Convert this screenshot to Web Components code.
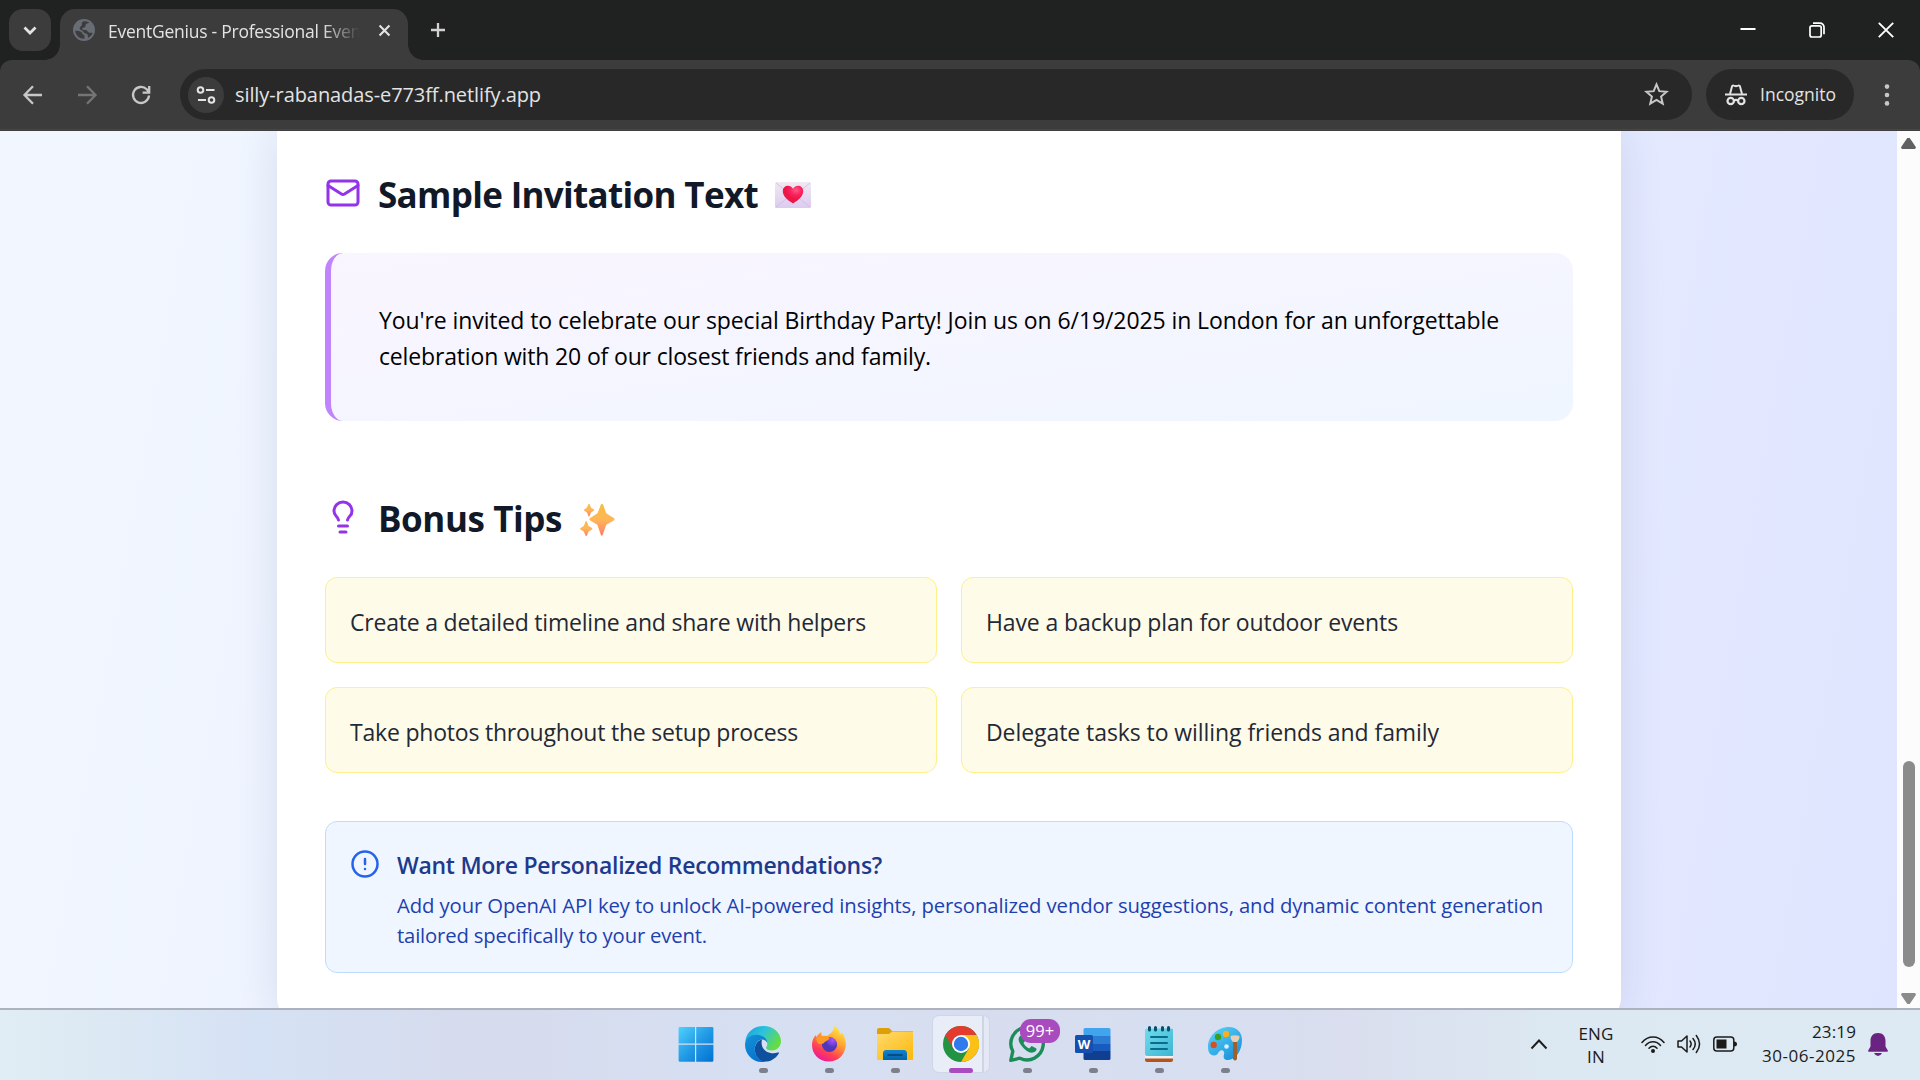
<!DOCTYPE html>
<html lang="en">
<head>
<meta charset="UTF-8">
<title>EventGenius - Professional Event Planner</title>
<style>
  body {
    margin: 0;
    width: 1920px;
    height: 1080px;
    overflow: hidden;
    display: flex;
    flex-direction: column;
    font-family: "Open Sans", "Noto Sans", sans-serif;
  }
</style>
</head>
<body>

<browser-tabs>
  <fit-line slot="title" width="253">EventGenius - Professional Even</fit-line>
</browser-tabs>
<browser-toolbar>
  <fit-line slot="url" width="306">silly-rabanadas-e773ff.netlify.app</fit-line>
</browser-toolbar>

<page-view>
  <section-title icon="mail" emoji="letter">
    <fit-line width="380">Sample Invitation Text</fit-line>
  </section-title>
  <invite-quote>
    <fit-line width="1120">You're invited to celebrate our special Birthday Party! Join us on 6/19/2025 in London for an unforgettable</fit-line>
    <fit-line width="552">celebration with 20 of our closest friends and family.</fit-line>
  </invite-quote>
  <section-title icon="bulb" emoji="sparkles" class="second">
    <fit-line width="184">Bonus Tips</fit-line>
  </section-title>
  <tip-grid>
    <tip-card><fit-line width="516">Create a detailed timeline and share with helpers</fit-line></tip-card>
    <tip-card><fit-line width="412">Have a backup plan for outdoor events</fit-line></tip-card>
    <tip-card><fit-line width="448">Take photos throughout the setup process</fit-line></tip-card>
    <tip-card><fit-line width="453">Delegate tasks to willing friends and family</fit-line></tip-card>
  </tip-grid>
  <info-callout>
    <fit-line slot="title" width="485">Want More Personalized Recommendations?</fit-line>
    <fit-line width="1146">Add your OpenAI API key to unlock AI-powered insights, personalized vendor suggestions, and dynamic content generation</fit-line>
    <fit-line width="310">tailored specifically to your event.</fit-line>
  </info-callout>
</page-view>

<task-bar>
  <task-item icon="windows"></task-item>
  <task-item icon="edge" running></task-item>
  <task-item icon="firefox" running></task-item>
  <task-item icon="folder" running></task-item>
  <task-item icon="chrome" running active></task-item>
  <task-item icon="whatsapp" running badge="99+"></task-item>
  <task-item icon="word" running></task-item>
  <task-item icon="notepad" running></task-item>
  <task-item icon="paint" running></task-item>
  <system-tray slot="tray"></system-tray>
</task-bar>

<script>
// name -> [viewBox, markup]
const ICONS = {
  chevronDown: ['0 0 24 24', '<path d="M6.5 9.5 12 15l5.5-5.5" fill="none" stroke="currentColor" stroke-width="2.8"/>'],
  globe: ['0 0 22 22', '<circle cx="11" cy="11" r="11" fill="currentColor"/><path d="M2.2 11.800c2.600.1 4.800.3 6 1.200 1.300 1 .8 2.400 2.300 2.800 1 .3 1 1.200 1 2.200v1.800C6.500 20 2.600 16.500 2.200 11.800ZM10.500 2.200c3-.2 4.300.4 5.700 1.400-1 1.200-2.700.9-3.400 1.900-.7 1.100.2 1.900-1 2.700-1.200.7-2.400.2-2.600 1.500-.1 1.200 1.500 1.300 3.300 1.300 1.900 0 1.900 1.900 3.200 2.500 1.300.5 2.600.1 4 .2-.8 2.300-2.500 4.200-4.900 5.300.2-1.700.4-3.300-.8-4-1.500-.8-3-.5-3.600-2.200C9.800 11.300 7 11.700 6.700 9.300c-.2-2 1.800-1.900 2.100-3.400.2-1.300-.6-2.400 1.700-3.700Z" fill="#3c3c3c"/>'],
  close: ['0 0 24 24', '<path d="m5 5 14 14M19 5 5 19" fill="none" stroke="currentColor" stroke-width="3"/>'],
  plus: ['0 0 16 16', '<path d="M8 1v14M1 8h14" fill="none" stroke="currentColor" stroke-width="2.3"/>'],
  minimise: ['0 0 16 16', '<path d="M.5 7h15" stroke="currentColor" stroke-width="2"/>'],
  restore: ['0 0 16 16', '<rect x="1" y="3.8" width="11.2" height="11.2" rx="2" fill="none" stroke="currentColor" stroke-width="1.7"/><path d="M4 1.2h7a4 4 0 0 1 4 4v7" fill="none" stroke="currentColor" stroke-width="1.7"/>'],
  winClose: ['0 0 16 16', '<path d="m.8.8 14.4 14.4M15.2.8.8 15.2" stroke="currentColor" stroke-width="1.9"/>'],
  back: ['0 0 24 24', '<path d="M21 12H4M12 3.2 3.500 12l8.500 8.800" fill="none" stroke="currentColor" stroke-width="2.3"/>'],
  forward: ['0 0 24 24', '<path d="M3 12h17M12 3.2l8.500 8.800-8.500 8.800" fill="none" stroke="currentColor" stroke-width="2.3"/>'],
  reload: ['0 0 24 24', '<path d="M20 12.5a8 8 0 1 1-2.3-6.200L20 9M20.2 3v6.600h-6.600" fill="none" stroke="currentColor" stroke-width="2.3"/>'],
  tune: ['0 0 20 20', '<g fill="none" stroke="currentColor" stroke-width="2"><circle cx="4.500" cy="5" r="2.800"/><path d="M10 5h8.500M2 15h8"/><circle cx="15.5" cy="15" r="2.8"/></g>'],
  star: ['0 0 24 24', '<path d="m12 2.300 2.700 6.500 7 .6-5.300 4.600 1.600 6.800-6-3.600-6 3.600L7.600 14 2.300 9.400l7-.6Z" fill="none" stroke="currentColor" stroke-width="1.9"/>'],
  incognito: ['0 0 24 24', '<path d="M1 11.5h22" stroke="currentColor" stroke-width="2"/><path d="M6 11 8 3.500c.3-1 1-1.200 1.800-.9l2.200.7 2.200-.7c.8-.3 1.500-.1 1.800.9L18 11" fill="none" stroke="currentColor" stroke-width="2"/><g fill="none" stroke="currentColor" stroke-width="2.2"><circle cx="6.700" cy="18" r="3.200"/><circle cx="17.300" cy="18" r="3.200"/><path d="M10 17.500q2-1.200 4 0"/></g>'],
  dots: ['0 0 6 24', '<g fill="currentColor"><circle cx="3" cy="3.600" r="2.300"/><circle cx="3" cy="12" r="2.300"/><circle cx="3" cy="20.400" r="2.300"/></g>'],

  mail: ['0 0 24 24', '<g fill="none" stroke="currentColor" stroke-width="2" stroke-linecap="round" stroke-linejoin="round"><rect width="20" height="16" x="2" y="4" rx="2"/><path d="m22 7-8.970 5.700a1.940 1.940 0 0 1-2.060 0L2 7"/></g>'],
  bulb: ['0 0 24 24', '<path d="M15 14c.2-1 .7-1.700 1.500-2.500 1-.9 1.500-2.200 1.500-3.500A6 6 0 0 0 6 8c0 1 .2 2.200 1.500 3.500.7.7 1.300 1.500 1.500 2.500M9 18h6M10 22h4" fill="none" stroke="currentColor" stroke-width="2" stroke-linecap="round" stroke-linejoin="round"/>'],
  alert: ['0 0 24 24', '<g fill="none" stroke="currentColor" stroke-width="2" stroke-linecap="round"><circle cx="12" cy="12" r="10"/><path d="M12 8v4M12 16h.01"/></g>'],
  letter: ['0 0 36 36', `
    <defs>
      <linearGradient id="env" x2="0" y2="1"><stop stop-color="#f1e9f2"/><stop offset="1" stop-color="#dccbf0"/></linearGradient>
      <radialGradient id="heart" cx=".65" cy=".25"><stop stop-color="#ff5a84"/><stop offset=".55" stop-color="#fb2260"/><stop offset="1" stop-color="#ec1746"/></radialGradient>
    </defs>
    <rect y="5" width="36" height="26" rx="1.5" fill="url(#env)"/>
    <path d="m1 30 12-9.500M35 30l-12-9.500M1 6l10 8M35 6l-10 8" stroke="#cbbce0" stroke-width=".8"/>
    <path d="M18 26.500C12 23 7.800 18.800 7.800 14.300c0-6.300 7.500-7.300 10.200-2.600 2.700-4.700 10.200-3.700 10.200 2.600 0 4.500-4.200 8.700-10.200 12.200Z" fill="url(#heart)"/>`],
  sparkles: ['0 0 36 36', `
    <defs><linearGradient id="spark" x2="0" y2="1"><stop stop-color="#f5be45"/><stop offset=".5" stop-color="#ffb657"/><stop offset="1" stop-color="#ff7c6b"/></linearGradient></defs>
    <g fill="url(#spark)">
      <path d="M21.800 3.800q1.200-2.200 2.400 0l3 8.500 7.500 4.700q1.800 1.200 0 2.400l-7.500 4.300-3.400 10q-1 2.200-2 0l-3.400-10-7.200-4.300q-1.800-1.200 0-2.400l7.300-4.700Z"/>
      <path d="M9.400 3.200q.6-1 1.200 0l1.300 3.400 2.900 1.800q.9.700 0 1.400L12 11.500l-1.400 3.600q-.6 1-1.200 0L8 11.500 5.300 9.800q-.9-.7 0-1.400L8 6.600Z"/>
      <path d="M6.500 20.700q.7-1.200 1.400 0l1.700 4.400 3.400 2q.9.700 0 1.400l-3.400 2-1.700 4q-.7 1.200-1.400 0l-1.700-4-3.300-2q-.9-.7 0-1.400l3.300-2Z"/>
    </g>`],

  windows: ['0 0 36 36', `
    <defs><linearGradient id="win" gradientUnits="userSpaceOnUse" x1="0" y1="0" x2="36" y2="36"><stop stop-color="#50d4ff"/><stop offset=".5" stop-color="#239be6"/><stop offset="1" stop-color="#0070d1"/></linearGradient></defs>
    <path d="M2 1h15v16.500H.6V2.300Q.6 1 2 1Zm16.200 0H34q1.400 0 1.400 1.300v15.200H18.200ZM.6 18.700H17v17.100H2q-1.400 0-1.400-1.300Zm17.600 0h17.200v15.800q0 1.300-1.400 1.300H18.200Z" fill="url(#win)"/>`],
  edge: ['0 0 36 36', `
    <defs>
      <linearGradient id="e1" x2="1" y2=".5"><stop stop-color="#1a9de0"/><stop offset=".5" stop-color="#2cc3dc"/><stop offset="1" stop-color="#65dc45"/></linearGradient>
      <linearGradient id="e2" x2=".6" y2="1"><stop stop-color="#1493d6"/><stop offset="1" stop-color="#0670cf"/></linearGradient>
    </defs>
    <path d="M.4 15C1.500 6 9 0 18.500 0 29 0 36 7.500 36 15c0 5.500-4 9.500-9 9.500-4 0-6-1.500-6-2.600 0-.9 1.300-1.500 1.300-4.200 0-2.200-3.500-5-8.300-5Z" fill="url(#e1)"/>
    <path d="M0 18.500C.2 12 6 8.700 11.500 8.700c7 0 10.800 4.600 10.800 8.300-.8-2.300-2.800-3.600-5-3.600-4.500 0-7.500 4.500-7.500 10 0 6.500 5 11.600 11 12.300C9 38 0 29 0 18.500Z" fill="url(#e2)"/>
    <path d="M17 13.500c-4.500 1-7.200 5.200-7.200 9.900C9.800 30.500 15.300 36 22 35.600c5-.8 9.300-4 11.800-8.200.4-.8-.3-1.300-1-1-7 2.800-18.500-1.500-15.800-12.900Z" fill="#0e509e"/>`],
  firefox: ['0 0 36 36', `
    <defs>
      <linearGradient id="f1" x1=".85" x2=".3" y2="1"><stop stop-color="#fff14a"/><stop offset=".4" stop-color="#ffa52f"/><stop offset=".75" stop-color="#ff3f54"/><stop offset="1" stop-color="#ed15a0"/></linearGradient>
      <radialGradient id="f2" cx=".7" cy=".2"><stop stop-color="#ad53ff"/><stop offset="1" stop-color="#4e36bd"/></radialGradient>
    </defs>
    <path d="M23.500 0c4 2.200 5 5.500 5.500 8.500l1.800-2c3 3.500 4.200 8 4 12.500C34.200 29 27 35.500 18 35.500 8 35.500 1 28 1 19c0-4 1.500-8 4-10l.6 2.500c1-2.800 3.200-4.700 4.800-5.500-.3 1.600.2 3 .6 4 1.500-.5 3.200-.5 5 0 3-2 7-4.500 7.500-10Z" fill="url(#f1)"/>
    <circle cx="18.500" cy="18.500" r="7.600" fill="url(#f2)"/>
    <path d="M10 9.800c3.500 1 5.800-.2 8.800 2.300-1 2-3 2.500-4.200 3.500-1.700 1.300-2.400 3-5.600 2.400-2.700-.5-3.800-3-3.400-6.500Z" fill="#ff9a27"/>`],
  folder: ['0 0 36 36', `
    <defs><linearGradient id="fo" x2=".8" y2="1"><stop stop-color="#ffdb70"/><stop offset="1" stop-color="#fdba10"/></linearGradient>
    <linearGradient id="fb" x2="0" y2="1"><stop stop-color="#1183d2"/><stop offset="1" stop-color="#0562a5"/></linearGradient></defs>
    <path d="M0 4q0-2 2-2h9q1.500 0 2.500 1.200L15 5h21v5H0Z" fill="#dda009"/>
    <path d="M0 8h12l3-2.500h21V34H0Z" fill="url(#fo)"/>
    <path d="M6 34v-6.500Q6 24 9 24h18q3 0 3 3.500V34Z" fill="url(#fb)"/><path d="M11 29h14" stroke="#063f73" stroke-width="1.6" stroke-linecap="round"/>`],
  chrome: ['0 0 36 36', `
    <circle cx="18" cy="18" r="18" fill="#229342"/>
    <path d="M18 9h15.600A18 18 0 0 0 2.400 9l7.800 13.500Z" fill="#e33b2e"/>
    <path d="M18 9h15.600A18 18 0 0 1 18 36l7.800-13.500Z" fill="#fcc117"/>
    <circle cx="18" cy="18" r="9" fill="#fff"/><circle cx="18" cy="18" r="7.2" fill="#2f7bee"/>`],
  whatsapp: ['0 0 36 36', `
    <path d="m1.800 34.300 2-9A16.200 16.200 0 1 1 11 32.200Z" fill="none" stroke="#1c8c58" stroke-width="3.4" stroke-linejoin="round"/>
    <path d="M12.500 9.500c-4 1-3.500 5.500-.5 9.500 4 5.500 8.500 8.300 12 7.500 3-.7 3.800-2.300 3.400-4l-4.700-2.400-2.500 2.400c-2.500-1-4.500-3-5.700-5.400l1.700-2.300-2-4.800Z" fill="#1c8c58"/>`],
  word: ['0 0 36 36', `
    <path d="M10 2h24q1.500 0 1.500 1.500V10H8.500V3.500Q8.500 2 10 2Z" fill="#41a5ee"/><path d="M8.500 10h27v8h-27Z" fill="#2b7cd3"/><path d="M8.500 18h27v7h-27Z" fill="#185abd"/><path d="M8.500 25h27v7.500q0 1.500-1.500 1.500H10q-1.500 0-1.500-1.500Z" fill="#103f91"/>
    <rect y="9" width="18" height="18" rx="1.5" fill="#1650ae"/>
    <text x="9" y="22.7" text-anchor="middle" font-size="13" font-weight="700" fill="#fff">W</text>`],
  notepad: ['0 0 36 36', `
    <defs><linearGradient id="np" x2="1" y2="1"><stop stop-color="#6fdcec"/><stop offset="1" stop-color="#3fb5d3"/></linearGradient></defs>
    <path d="M4 29h28v5q0 2-2 2H6q-2 0-2-2Z" fill="#b5531b"/><path d="M4 29h28v3.500H4Z" fill="#f3f1f0"/>
    <path d="M4 4q0-1.500 1.500-1.500h25Q32 2.500 32 4v26H6q-2 0-2-2Z" fill="url(#np)"/>
    <path d="M8.500 1.500v2.500M14.500 1.500v2.500M21.500 1.500v2.500M27.500 1.500v2.500" stroke="#07506e" stroke-width="3" stroke-linecap="round"/>
    <path d="M10 11h16M10 17h16M10 23h16" stroke="#086d8c" stroke-width="2" stroke-linecap="round"/>`],
  paint: ['0 0 36 36', `
    <defs><linearGradient id="pa" x2=".8" y2="1"><stop stop-color="#5ad8fa"/><stop offset="1" stop-color="#198fdc"/></linearGradient></defs>
    <path d="M22 1c8 0 13 5.500 13 13 0 10-5.500 19.500-14 20-4 .3-5-2.500-4-5.500 1-3.200-1.300-5-3.500-4-2.500 1.200-2.500 5-6.500 5C3 29.500.8 26 1 20 1.500 9.500 11 1 22 1Z" fill="url(#pa)"/>
    <circle cx="6.700" cy="19" r="3.200" fill="#d85022"/><circle cx="11" cy="11" r="3.200" fill="#3a9e22"/><circle cx="19" cy="8" r="3.200" fill="#fbb116"/><circle cx="19.500" cy="20.500" r="2.300" fill="#d7f1fc"/>
    <path d="M26 16h4v17q-2 3-4 0Z" fill="#a1602a"/><path d="M23.500 10q4.500-1.500 9 0c0 3-1 4-2.500 6h-4c-1.500-2-2.500-3-2.500-6Z" fill="#e8cdb0"/>`],

  chevronUp: ['0 0 18 12', '<path d="m1.500 10.500 7.500-8 7.500 8" fill="none" stroke="currentColor" stroke-width="1.9"/>'],
  wifi: ['0 0 24 20', '<g fill="none" stroke="currentColor" stroke-width="1.5" stroke-linecap="round"><path d="M1 8.500C7 1 17 1 23 8.500M4.500 11.500c4.200-5 10.800-5 15 0M8 14.300c2.300-2.600 5.700-2.600 8 0"/></g><circle cx="12" cy="17" r="2" fill="currentColor"/>'],
  speaker: ['0 0 24 20', '<g fill="none" stroke="currentColor" stroke-width="1.5" stroke-linecap="round" stroke-linejoin="round"><path d="M1 7v6h3.500l5.500 5V2L4.500 7ZM13 7q2.300 3 0 6M16 4.500q4.500 5.500 0 11M19.300 1.500q6.500 8.500 0 17"/></g>'],
  battery: ['0 0 24 20', '<rect x=".8" y="3" width="20" height="14" rx="3" fill="none" stroke="currentColor" stroke-width="1.5"/><path d="M3.500 5.500h10v9h-10ZM21 7.500q3 0 3 2.500t-3 2.500Z" fill="currentColor"/>'],
  bell: ['0 0 20 24', '<path d="M10 0c5 0 7.500 3.500 7.500 8v5.500l2.300 4q.5 1.300-.8 1.300H1q-1.300 0-.8-1.300l2.300-4V8C2.500 3.500 5 0 10 0ZM6 20h8q-1.500 3-4 3t-4-3Z" fill="currentColor"/>'],
}

const icon = (name, w, h = w) => {
  const [box, body] = ICONS[name]
  return `<svg width="${w}" height="${h}" viewBox="${box}" aria-hidden="true">${body}</svg>`
}

const define = (name, html) => {
  customElements.define(name, class extends HTMLElement {
    constructor() {
      super()
      this.attachShadow({ mode: 'open' }).innerHTML =
        `<style>svg { display: block; flex: none; }</style>` +
        (typeof html === 'function' ? html(this) : html)
    }
  })
}

/**
 * <fit-line width="306">text</fit-line>
 * One line of text, tracked so that it spans the given width.
 */
class FitLine extends HTMLElement {
  constructor() {
    super()
    this.attachShadow({ mode: 'open' }).innerHTML = `
      <style>
        :host { display: block; width: max-content; white-space: nowrap; }
      </style>
      <slot></slot>`
  }

  fit() {
    const target = Number(this.getAttribute('width'))
    this.style.letterSpacing = '0'
    const natural = this.getBoundingClientRect().width
    this.style.letterSpacing = `${(target - natural) / this.textContent.length}px`
  }
}

define('browser-tabs', `
  <style>
    :host { display: flex; height: 60px; background: #202221; color: #e3e3e3; flex: none; }
    .menu { width: 42px; height: 42px; margin: 9px 9px 0; border-radius: 14px; background: #3c3c3c;
            display: grid; place-items: center; }
    .tab { position: relative; width: 348px; height: 51px; margin-top: 9px; box-sizing: border-box; padding: 0 15px 9px 13px;
           display: flex; align-items: center; background: #3c3c3c; border-radius: 15px 15px 0 0; }
    /* flares where the tab meets the toolbar */
    .tab::before, .tab::after { content: ''; position: absolute; bottom: 0; width: 15px; height: 15px; }
    .tab::before { left: -15px; background: radial-gradient(circle at 0 0, transparent 14.5px, #3c3c3c 15px); }
    .tab::after { right: -15px; background: radial-gradient(circle at 100% 0, transparent 14.5px, #3c3c3c 15px); }
    .globe { color: #686d75; }
    .title { width: 252px; margin: 2px 0 0 13px; overflow: hidden; font-size: 17.5px; line-height: 26px;
             mask-image: linear-gradient(90deg, #000 85%, transparent); }
    .close { margin-left: auto; }
    .plus { margin: 22px 0 0 22px; color: #d2d2d2; }
    .controls { margin: 22px 26px 0 auto; display: flex; gap: 53px; color: #fff; }
  </style>
  <div class="menu">${icon('chevronDown', 24)}</div>
  <div class="tab">
    <div class="globe">${icon('globe', 22)}</div>
    <div class="title"><slot name="title"></slot></div>
    <div class="close">${icon('close', 17)}</div>
  </div>
  <div class="plus">${icon('plus', 16)}</div>
  <div class="controls">${icon('minimise', 16)}${icon('restore', 16)}${icon('winClose', 16)}</div>
`)

define('browser-toolbar', `
  <style>
    :host { display: block; height: 71px; background: #202221; flex: none; }
    .bar { height: 71px; box-sizing: border-box; padding: 9px 24px 9px 21px; display: flex; align-items: flex-start;
           background: linear-gradient(#3c3c3c 69px, #494949 69px, #3c3c3c 71px); border-radius: 12px 12px 0 0; }
    .nav { display: flex; gap: 30px; height: 51px; align-items: center; color: #c7c7c7; }
    .nav :nth-child(2) { color: #757575; }
    .omni { width: 1512px; height: 51px; box-sizing: border-box; margin-left: 27px; padding: 0 23px 0 8px; border-radius: 26px;
            background: #282828; display: flex; align-items: center; color: #e3e3e3; }
    .site { width: 36px; height: 36px; border-radius: 50%; background: #3c3c3c; display: grid; place-items: center; }
    .url { margin-left: 11px; font-size: 20px; line-height: 28px; }
    .star { margin-left: auto; color: #c7c7c7; }
    .incognito { width: 148px; height: 51px; box-sizing: border-box; margin-left: 14px; padding-left: 18px; border-radius: 26px;
                 background: #282828; display: flex; align-items: center; gap: 12px; color: #e3e3e3; font-size: 17.5px; }
    .incognito fit-line { margin-top: -1px; }
    .dots { margin: 14px 0 0 auto; color: #c7c7c7; padding-right: 6px; }
  </style>
  <div class="bar">
    <div class="nav"><i>${icon('back', 24)}</i><i>${icon('forward', 24)}</i><i>${icon('reload', 24)}</i></div>
    <div class="omni">
      <div class="site">${icon('tune', 20)}</div>
      <div class="url"><slot name="url"></slot></div>
      <div class="star">${icon('star', 25)}</div>
    </div>
    <div class="incognito">${icon('incognito', 24)}<fit-line width="76">Incognito</fit-line></div>
    <div class="dots">${icon('dots', 6, 24)}</div>
  </div>
`)

define('page-view', `
  <style>
    :host { height: 877px; display: flex; overflow: hidden; flex: none; }
    .backdrop { flex: 1; background: linear-gradient(100deg, #f2f7ff, #e9efff 50%, #e0e5ff); }
    .card { width: 1344px; height: 891px; box-sizing: border-box; margin-left: 277px; padding: 36px 48px 0;
            background: #fff; border-radius: 0 0 24px 24px; box-shadow: 0 0 44px rgb(30 40 90 / 11%); }
    .scroll { width: 23px; background: #fcfcfc; display: flex; flex-direction: column; align-items: center; }
    .up, .down { width: 15px; height: 11px; background: #616161; clip-path: polygon(42% 0, 58% 0, 100% 85%, 94% 100%, 6% 100%, 0 85%); }
    .up { margin-top: 7px; }
    .down { margin-top: auto; margin-bottom: 4px; background: #8b8b8b; transform: scaleY(-1); }
    .thumb { width: 12px; height: 206px; margin-top: 612px; border-radius: 6px; background: #8b8b8b; }
  </style>
  <div class="backdrop"><div class="card"><slot></slot></div></div>
  <div class="scroll"><div class="up"></div><div class="thumb"></div><div class="down"></div></div>
`)

define('section-title', el => `
  <style>
    :host { display: flex; height: 54px; margin-bottom: 32px; color: #111827; font-size: 35px; font-weight: 700; line-height: 56px; }
    :host(.second) { margin-top: 70px; }
    .icon { margin: 8px 17px 0 0; color: #9333ea; }
    .emoji { margin: 10px 0 0 17px; }
  </style>
  <div class="icon">${icon(el.getAttribute('icon'), 36)}</div>
  <slot></slot>
  <div class="emoji">${icon(el.getAttribute('emoji'), 36)}</div>
`)

define('invite-quote', `
  <style>
    :host { display: block; height: 168px; box-sizing: border-box; padding: 49px 0 0 48px; border-left: 6px solid #c084fc;
            border-radius: 18px; background: linear-gradient(to bottom right, #faf5ff, #eff6ff); color: #000;
            font-size: 23px; line-height: 36px; }
  </style>
  <slot></slot>
`)

define('tip-grid', `
  <style>
    :host { display: grid; grid-template-columns: 1fr 1fr; gap: 24px; }
  </style>
  <slot></slot>
`)

define('tip-card', `
  <style>
    :host { display: flex; align-items: center; height: 86px; box-sizing: border-box; padding: 3px 24px 0;
            border: 1px solid #fef08a; border-radius: 12px; background: #fefbe8; color: #1f2937;
            font-size: 23px; line-height: 36px; }
  </style>
  <slot></slot>
`)

define('info-callout', `
  <style>
    :host { display: flex; height: 152px; box-sizing: border-box; margin-top: 48px; padding: 25px 24px 0;
            border: 1px solid #bfdbfe; border-radius: 12px; background: #eff6ff; }
    .icon { margin: 2px 17px 0 0; color: #2563eb; }
    .title { margin-bottom: 7px; color: #1e3a8a; font-size: 23px; font-weight: 600; line-height: 36px; }
    .body { color: #1e40af; font-size: 20.3px; line-height: 30px; }
  </style>
  <div class="icon">${icon('alert', 30)}</div>
  <div>
    <div class="title"><slot name="title"></slot></div>
    <div class="body"><slot></slot></div>
  </div>
`)

define('task-bar', `
  <style>
    :host { display: grid; grid-template-columns: 1fr 594px 1fr; height: 72px; box-sizing: border-box; border-top: 2px solid #adb2be; flex: none;
            background: linear-gradient(90deg, #e0edf3, #d5e1f4 14%, #d6dbed 25%, #d6e0f3 40%, #d7ddef 52%, #d6dff1 60%, #dadeee 70%, #dce9f2 82%, #dde9f3); }
    .apps { grid-column: 2; display: flex; padding-left: 1px; }
  </style>
  <div class="apps"><slot></slot></div>
  <slot name="tray"></slot>
`)

define('task-item', el => {
  const badge = el.getAttribute('badge')
  return `
  <style>
    :host { position: relative; width: 66px; height: 70px; flex: none; display: flex; flex-direction: column; align-items: center; }
    :host([icon="windows"]) svg { margin-right: 2px; }
    .tile { width: 56px; height: 56px; margin-top: 6px; display: grid; place-items: center; border-radius: 6px; }
    :host([active]) .tile { background: linear-gradient(90deg, #e9edf8 49px, #cdd4e6 49px 51px, #e5e9f6 51px); box-shadow: 0 0 0 1px #cfd6e8; }
    .mark { position: absolute; top: 58px; width: 9px; height: 5px; border-radius: 3px; background: #7d808a; display: none; }
    :host([running]) .mark { display: block; }
    :host([active]) .mark { width: 24px; background: #a94bbf; }
    .badge { position: absolute; left: 26px; top: 9px; width: 40px; height: 24px; border-radius: 11px; background: #a94bbf;
             color: #fff; font-size: 16.5px; line-height: 24px; text-align: center; }
  </style>
  <div class="tile">${icon(el.getAttribute('icon'), 36)}</div>
  <div class="mark"></div>
  ${badge ? `<div class="badge">${badge}</div>` : ''}`
})

define('system-tray', `
  <style>
    :host { display: flex; justify-content: flex-end; align-items: flex-start; padding-right: 32px; color: #1b1b1b; font-size: 17px; line-height: 23px; }
    .up { margin: 28px 30px 0 0; }
    .lang { width: 36px; margin-top: 12px; display: flex; flex-direction: column; align-items: center; }
    .status { display: flex; gap: 12px; margin: 24px 26px 0 27px; }
    .clock { width: 93px; margin-top: 10px; display: flex; flex-direction: column; align-items: flex-end; line-height: 24px; }
    .bell { margin: 23px 0 0 12px; color: #6b2382; }
  </style>
  <div class="up">${icon('chevronUp', 18, 12)}</div>
  <div class="lang"><fit-line width="35">ENG</fit-line><fit-line width="18">IN</fit-line></div>
  <div class="status">${icon('wifi', 24, 20)}${icon('speaker', 24, 20)}${icon('battery', 24, 20)}</div>
  <div class="clock"><fit-line width="44">23:19</fit-line><fit-line width="94">30-06-2025</fit-line></div>
  <div class="bell">${icon('bell', 20, 24)}</div>
`)

customElements.define('fit-line', FitLine)

// Fit every line once all the components have their styles
const fitAll = root => {
  root.querySelectorAll('*').forEach(el => {
    if (el instanceof FitLine) el.fit()
    else if (el.shadowRoot) fitAll(el.shadowRoot)
  })
}
fitAll(document)
</script>
</body>
</html>
